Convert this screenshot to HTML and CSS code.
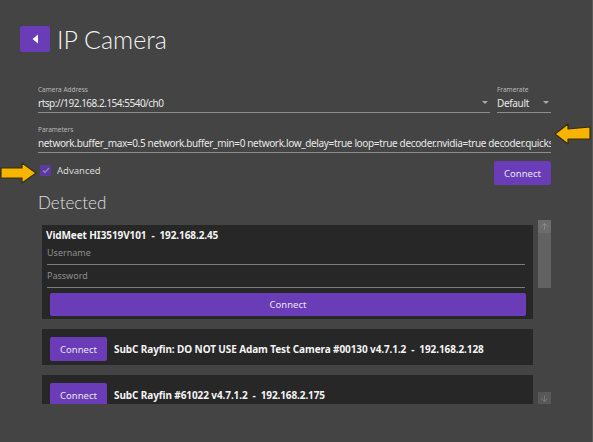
FILE: index.html
```html
<!DOCTYPE html>
<html lang="en">
<head>
    <meta charset="UTF-8">
    <meta name="viewport" content="width=device-width, initial-scale=1.0">
    <title>IP Camera</title>
    <link rel="stylesheet" href="styles.css">
</head>
<body>
    <header class="page-header">
        <button class="back-btn">
            <svg width="8" height="10" viewBox="0 0 8 10"><path d="M7 0.5 L7 9.5 L1.5 5 Z" fill="#fff"/></svg>
        </button>
        <h1>IP Camera</h1>
    </header>
    <main class="content">
        <div class="field-row">
            <div class="field field-address">
                <label>Camera Address</label>
                <div class="field-value">
                    <span class="address">rtsp://192.168.2.154:5540/ch0</span>
                    <span class="caret"></span>
                </div>
            </div>
            <div class="field field-framerate">
                <label>Framerate</label>
                <div class="field-value">
                    <span>Default</span>
                    <span class="caret"></span>
                </div>
            </div>
        </div>
        <div class="field field-params">
            <label>Parameters</label>
            <div class="field-value">
                <span class="clip">network.buffer_max=0.5 network.buffer_min=0 network.low_delay=true loop=true decoder.nvidia=true decoder.quicksync=true</span>
            </div>
        </div>
        <div class="options-row">
            <label class="check">
                <span class="check-box">
                    <svg width="8" height="7" viewBox="0 0 8 7"><path d="M1 3.5 L3 5.5 L7 1" stroke="#9a86c9" stroke-width="1.2" fill="none"/></svg>
                </span>
                Advanced
            </label>
            <button class="btn btn-small">Connect</button>
        </div>
        <h2>Detected</h2>
        <div class="detected">
            <div class="device-list">
                <div class="card card-open">
                    <div class="card-title">VidMeet HI3519V101&nbsp; - &nbsp;192.168.2.45</div>
                    <div class="card-input">Username</div>
                    <div class="card-input">Password</div>
                    <button class="btn btn-wide">Connect</button>
                </div>
                <div class="card card-row">
                    <button class="btn btn-small">Connect</button>
                    <div class="card-title">SubC Rayfin: DO NOT USE Adam Test Camera #00130 v4.7.1.2&nbsp; - &nbsp;192.168.2.128</div>
                </div>
                <div class="card card-row">
                    <button class="btn btn-small">Connect</button>
                    <div class="card-title">SubC Rayfin #61022 v4.7.1.2&nbsp; - &nbsp;192.168.2.175</div>
                </div>
            </div>
            <div class="scrollbar">
                <div class="scroll-thumb">
                    <div class="scroll-up">
                        <svg width="7" height="7" viewBox="0 0 7 7"><path d="M3.5 0.5 L6.5 3.5 M3.5 0.5 L0.5 3.5 M3.5 0.5 L3.5 6.5" stroke="#8a8a8a" stroke-width="1" fill="none"/></svg>
                    </div>
                </div>
                <div class="scroll-down">
                    <svg width="7" height="7" viewBox="0 0 7 7"><path d="M3.5 6.5 L6.5 3.5 M3.5 6.5 L0.5 3.5 M3.5 6.5 L3.5 0.5" stroke="#777" stroke-width="1" fill="none"/></svg>
                </div>
            </div>
        </div>
    </main>

    <!-- annotation arrows -->
    <svg class="hint hint-params" width="38" height="24" viewBox="0 0 38 24">
        <path d="M1 12 L14 2 L14 7 L36 5 L36 17 L14 17 L14 22 Z" fill="#f7b500" stroke="#3a2e00" stroke-width="1.2" stroke-linejoin="round"/>
    </svg>
    <svg class="hint hint-advanced" width="38" height="22" viewBox="0 0 38 22">
        <path d="M1 6 L22 6 L22 1 L36 11 L22 21 L22 16 L1 16 Z" fill="#f7b500" stroke="#3a2e00" stroke-width="1.2" stroke-linejoin="round"/>
    </svg>
</body>
</html>
```

FILE: styles.css
```css
body {
    margin: 0;
    height: 442px;
    overflow: hidden;
    font-family: "Noto Sans", "Open Sans", sans-serif;
    background-color: #444;
    color: #e8e8e8;
    box-shadow: inset -1px 0 #5a5a5a;
}

.page-header {
    display: flex;
    align-items: center;
    gap: 7px;
    padding: 26px 0 0 20px;
    height: 26px;
}

.back-btn {
    width: 30px;
    height: 26px;
    border: none;
    border-radius: 2px;
    background-color: #6a3cb8;
    display: flex;
    align-items: center;
    justify-content: center;
    padding: 0;
}

.page-header h1 {
    margin: 0;
    font-family: "Lato", "Noto Sans", sans-serif;
    font-size: 25px;
    font-weight: 300;
    color: #f2f2f2;
}

.content {
    padding: 33px 42px 0 38px;
}

.field-row {
    display: flex;
    gap: 7px;
}

.field label {
    display: block;
    font-size: 6.5px;
    color: #b8b8b8;
    line-height: 9px;
}

.field-value {
    display: flex;
    align-items: center;
    justify-content: space-between;
    height: 15px;
    font-size: 10px;
    letter-spacing: -0.35px;
    border-bottom: 1px solid #8c8c8c;
    padding: 1px 0 2px;
}

.field-value .address {
    letter-spacing: -0.5px;
}

.field-address {
    flex: 1;
}

.field-framerate {
    width: 54px;
}

.caret {
    width: 0;
    height: 0;
    border-left: 3px solid transparent;
    border-right: 3px solid transparent;
    border-top: 3px solid #aaa;
    margin-right: 2px;
}

.field-params {
    margin-top: 12px;
}

.clip {
    white-space: nowrap;
    overflow: hidden;
}

.options-row {
    display: flex;
    justify-content: space-between;
    align-items: flex-start;
    margin-top: 8px;
}

.check {
    display: flex;
    align-items: center;
    gap: 6px;
    font-size: 9.5px;
    color: #d8d8d8;
    margin: 3px 0 0 2px;
}

.check-box {
    width: 11px;
    height: 11px;
    background-color: #5a3a9e;
    border-radius: 1px;
    display: flex;
    align-items: center;
    justify-content: center;
}

.btn {
    border: none;
    border-radius: 2px;
    background-color: #6a3cb8;
    color: #e8e4f2;
    font-family: "Noto Sans", "Open Sans", sans-serif;
    font-size: 9.5px;
    padding: 0;
}

.btn-small {
    width: 57px;
    height: 24px;
    flex-shrink: 0;
}

.content h2 {
    margin: 7px 0 0;
    font-family: "Lato", "Noto Sans", sans-serif;
    font-size: 17px;
    font-weight: 300;
    color: #e0e0e0;
    line-height: 22px;
}

.detected {
    display: flex;
    gap: 5px;
    height: 184px;
    margin: 6px 0 0 4px;
    overflow: hidden;
}

.device-list {
    width: 491px;
    padding-top: 5px;
    display: flex;
    flex-direction: column;
    gap: 10px;
}

.card {
    background-color: #272727;
    flex-shrink: 0;
}

.card-title {
    font-size: 10px;
    font-weight: bold;
    color: #f4f4f4;
    white-space: nowrap;
    letter-spacing: -0.1px;
}

.card-open {
    padding: 3px 4px 3px 4px;
}

.card-input {
    margin: 0 4px 0 1px;
    height: 22px;
    line-height: 21px;
    font-size: 9px;
    color: #8e8e8e;
    border-bottom: 1px solid #7c7c7c;
}

.btn-wide {
    display: block;
    width: 476px;
    height: 23px;
    margin: 5px 0 0 4px;
}

.card-row {
    display: flex;
    align-items: flex-start;
    gap: 7px;
    padding: 8px 8px 4px;
}

.card-row .card-title {
    margin-top: 5px;
}

.scrollbar {
    width: 13px;
    display: flex;
    flex-direction: column;
    justify-content: space-between;
}

.scroll-thumb {
    height: 68px;
    background-color: #626262;
}

.scroll-up {
    height: 13px;
    background-color: #6c6c6c;
    display: flex;
    align-items: center;
    justify-content: center;
}

.scroll-down {
    height: 12px;
    background-color: #585858;
    display: flex;
    align-items: center;
    justify-content: center;
}

.hint {
    position: absolute;
}

.hint-params {
    left: 554px;
    top: 122px;
}

.hint-advanced {
    left: 0;
    top: 162px;
}
```
